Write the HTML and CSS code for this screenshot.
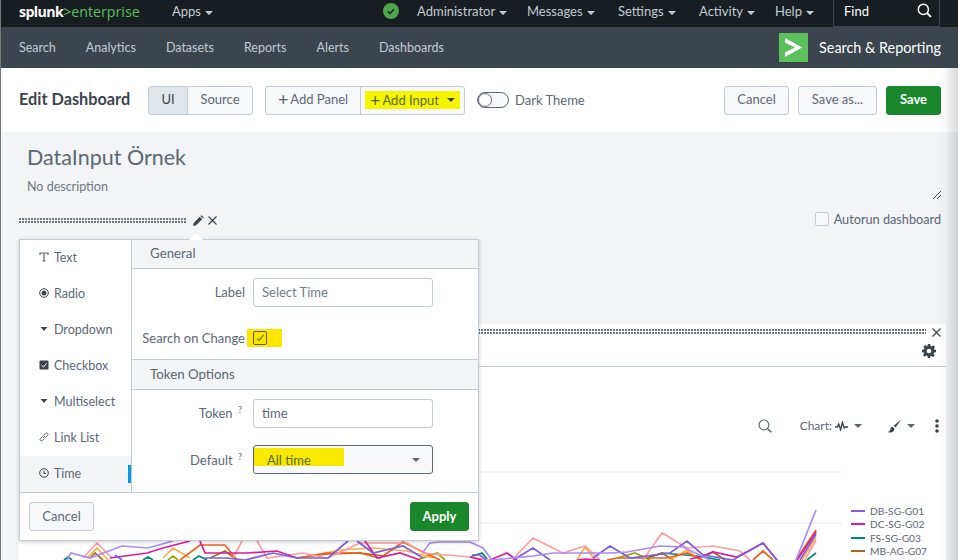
FILE: index.html
```html
<!DOCTYPE html>
<html lang="en">
<head>
  <meta charset="UTF-8" />
  <meta name="viewport" content="width=device-width, initial-scale=1" />
  <title>Edit Dashboard - Splunk</title>
  <link rel="stylesheet" href="styles.css">
</head>
<body>
  <div class="page">
    <header class="topbar">
      <div class="logo"><span class="logo-splunk">splunk</span><span class="logo-ent">&gt;enterprise</span></div>
      <a class="top-link apps">Apps <i class="caret"></i></a>
      <div class="top-right">
        <svg class="status" viewBox="0 0 16 16" width="16" height="16"><circle cx="8" cy="8" r="8" fill="#4fa64f"/><path d="M4.800 8.200l2.200 2.200 4-4.200" fill="none" stroke="#17212a" stroke-width="1.400"/></svg>
        <a class="top-link admin">Administrator <i class="caret"></i></a>
        <a class="top-link msg">Messages <i class="caret"></i></a>
        <a class="top-link set">Settings <i class="caret"></i></a>
        <a class="top-link act">Activity <i class="caret"></i></a>
        <a class="top-link hlp">Help <i class="caret"></i></a>
        <div class="find">
          <span>Find</span>
          <svg viewBox="0 0 16 16" width="15" height="15"><circle cx="6.800" cy="6.800" r="5.400" fill="none" stroke="#fff" stroke-width="1.600"/><path d="M10.800 10.800l4 4" stroke="#fff" stroke-width="2.200"/></svg>
        </div>
      </div>
    </header>

    <nav class="appbar">
      <a>Search</a>
      <a>Analytics</a>
      <a>Datasets</a>
      <a>Reports</a>
      <a>Alerts</a>
      <a>Dashboards</a>
      <div class="app-name">
        <span class="app-icon"><svg viewBox="0 0 29 29" width="29" height="29"><path d="M6 5l17 9.500-17 9.500v-4.500l10-5-10-5z" fill="#fff"/></svg></span>
        <span>Search &amp; Reporting</span>
      </div>
    </nav>

    <section class="toolbar">
      <h1>Edit Dashboard</h1>
      <div class="btn-group mode">
        <button class="active">UI</button>
        <button>Source</button>
      </div>
      <div class="btn-group add">
        <button class="add-panel"><span class="plus">+</span>Add Panel</button>
        <button class="add-input"><span class="mark"><span class="plus">+</span>Add Input <i class="caret dark"></i></span></button>
      </div>
      <div class="toggle"><i class="switch"><b></b></i>Dark Theme</div>
      <div class="actions">
        <button class="btn btn-cancel">Cancel</button>
        <button class="btn btn-saveas">Save as...</button>
        <button class="btn btn-save">Save</button>
      </div>
    </section>

    <main class="canvas">
      <h2>DataInput Örnek</h2>
      <p class="desc">No description</p>
      <svg class="resize" viewBox="0 0 8 8" width="8" height="8"><path d="M0 8l8-8M4 8l4-4" stroke="#444" stroke-width="1"/></svg>

      <div class="input-row">
        <div class="handle small"></div>
        <svg class="pencil" viewBox="0 0 12 12" width="11" height="11"><path d="M0 12l.8-3.400 6.600-6.600 2.600 2.600-6.600 6.600zM8.200 1.200l1-1 2.600 2.600-1 1z" fill="#3c444d"/></svg>
        <svg class="close" viewBox="0 0 9 9" width="9" height="9"><path d="M.5.5l8 8M8.500.5l-8 8" stroke="#3c444d" stroke-width="1.200"/></svg>
        <label class="autorun"><i class="check-empty"></i>Autorun dashboard</label>
      </div>

      <div class="panel">
        <div class="panel-head">
          <div class="handle wide"></div>
          <svg class="close" viewBox="0 0 9 9" width="9" height="9"><path d="M.5.5l8 8M8.500.5l-8 8" stroke="#3c444d" stroke-width="1.200"/></svg>
          <svg class="gear" viewBox="0 0 24 24" width="14" height="14"><path d="M10 0h4l.6 3.200 2.200.9 2.700-1.800 2.800 2.800-1.800 2.700.9 2.200L24 10v4l-3.200.6-.9 2.200 1.800 2.700-2.800 2.800-2.700-1.800-2.200.9L14 24h-4l-.6-3.200-2.200-.9-2.700 1.800-2.800-2.800 1.800-2.700-.9-2.200L0 14v-4l3.200-.6.9-2.200-1.800-2.700 2.800-2.800 2.700 1.800 2.200-.9zM12 8a4 4 0 100 8 4 4 0 000-8z" fill="#3c444d" fill-rule="evenodd"/></svg>
        </div>
        <div class="chart">
          <svg class="plot" viewBox="0 0 958 560" width="958" height="560">
            <path class="grid" d="M20 472H842M20 523H842"/>
            <path class="ln" stroke="#00897b" d="M64 560L68 557 72 560M143 560L148 557 153 560M193 560L199 556 207 560M470 557L482 553 488 560M647 558L662 553 697 556 720 560M807 560L816 553"/>
            <path class="ln" stroke="#9aa800" d="M168 560L173 556 178 560M417 560L437 553 445 560M617 558L635 553 650 560"/>
            <path class="ln" stroke="#a6681b" d="M90 558L95 553 103 560M210 558L225 551 237 560M297 558L327 554 360 553 385 556M650 557L662 553 673 560M703 557L713 552 725 560M797 560L816 531"/>
            <path class="ln" stroke="#f8b04a" d="M87 558L97 548 108 560M163 558L173 548 190 558M300 558L340 550 373 548 407 551 433 558M577 560L585 547 595 560M670 560L687 550 700 560M802 560L816 537"/>
            <path class="ln" stroke="#f25f1a" d="M180 560L200 545 225 545 237 560M297 558L327 553 360 553 380 558 403 542 423 552 440 560M607 560L617 558 667 558 687 553 703 560M753 560L763 551 773 560M796 560L816 530"/>
            <path class="ln" stroke="#ff9da0" d="M83 558L97 543 112 558M233 558L242 541M257 541L267 558 303 553 327 558 345 550 360 543 407 543 423 553 470 557 490 560M513 559L533 538 563 553 585 546 600 560M643 560L662 533 687 548 713 546 740 551 750 560M805 560L816 540"/>
            <path class="ln" stroke="#d91e9b" d="M110 558L147 553 163 548 190 541M200 541L205 553 247 553 277 551 297 558M365 541L377 558 400 553 420 560M470 557L482 560M490 560L507 553 517 560M577 560L585 559 600 560M690 559L700 557 713 552 737 557 763 543 777 560M797 560L816 532"/>
            <path class="ln" stroke="#7c5ee0" d="M115 555L122 560M203 558L227 558 245 560 273 553 297 558 328 558 348 541M357 541L373 553 403 546 423 558M472 555L480 555 486 560M513 560L533 548 550 560M593 558L610 546 630 558 670 553 687 541 703 555 733 560 763 543 777 560M800 560L816 534"/>
            <path class="ln" stroke="#a78bfa" d="M67 560L71 553 90 558 122 546 148 548 173 541M423 552L430 543 440 542 470 542 483 548 492 560 533 556 553 553 610 553 627 552 660 546 683 547 710 560M796 560L816 510"/>
          </svg>
          <ul class="legend">
            <li><i class="swatch s1"></i>DB-SG-G01</li>
            <li><i class="swatch s2"></i>DC-SG-G02</li>
            <li><i class="swatch s3"></i>FS-SG-G03</li>
            <li><i class="swatch s4"></i>MB-AG-G07</li>
          </ul>
        </div>
        <div class="chart-tools">
          <svg viewBox="0 0 16 16" width="14" height="14"><circle cx="6.800" cy="6.800" r="5.600" fill="none" stroke="#5c6773" stroke-width="1.300"/><path d="M10.800 10.800l4.400 4.400" stroke="#5c6773" stroke-width="1.800"/></svg>
          <span class="chart-label">Chart:</span>
          <svg class="pulse" viewBox="0 0 14 10" width="13" height="10"><path d="M0 6h2.500l1.500-3 2 6 2-8 2 6 1-1h3" fill="none" stroke="#3c444d" stroke-width="1.500"/></svg>
          <i class="caret grey"></i>
          <svg class="brush" viewBox="0 0 14 14" width="14" height="14"><path d="M13.500 0L5.800 6.800l1.700 1.700zM4.800 7.800c-1.800 0-2.300 1.300-2.500 2.700-.1 1-1 1.700-2.300 2.700 2.800.8 6.200.1 6.500-3.400z" fill="#3c444d"/></svg>
          <i class="caret grey"></i>
          <svg class="dots" viewBox="0 0 4 14" width="4" height="14"><circle cx="2" cy="2" r="1.800" fill="#3c444d"/><circle cx="2" cy="7" r="1.800" fill="#3c444d"/><circle cx="2" cy="12" r="1.800" fill="#3c444d"/></svg>
        </div>
      </div>

      <div class="popover">
        <div class="arrow"></div>
        <div class="pop-body">
          <ul class="types">
            <li><svg viewBox="0 0 10 10" width="10" height="10"><path d="M1 3V1h8v2M5 1v8M3.500 9h3" fill="none" stroke="#5c6773" stroke-width="1.200"/></svg>Text</li>
            <li><svg viewBox="0 0 10 10" width="10" height="10"><circle cx="5" cy="5" r="4.300" fill="none" stroke="#3c444d"/><circle cx="5" cy="5" r="2.500" fill="#3c444d"/></svg>Radio</li>
            <li><svg viewBox="0 0 10 10" width="10" height="10"><path d="M1.500 3h7L5 7z" fill="#3c444d"/></svg>Dropdown</li>
            <li><svg viewBox="0 0 10 10" width="10" height="10"><rect x=".5" y=".5" width="9" height="9" rx="1" fill="#3c444d"/><path d="M2.500 5.200l2 1.800 3-3.500" fill="none" stroke="#fff"/></svg>Checkbox</li>
            <li><svg viewBox="0 0 10 10" width="10" height="10"><path d="M1.500 3h7L5 7z" fill="#3c444d"/></svg>Multiselect</li>
            <li><svg viewBox="0 0 10 10" width="10" height="10"><path d="M4 6l2-2M3.500 4.500L1.500 6.500a1.400 1.400 0 002 2l2-2M6.500 5.500l2-2a1.400 1.400 0 00-2-2l-2 2" fill="none" stroke="#5c6773"/></svg>Link List</li>
            <li class="selected"><svg viewBox="0 0 10 10" width="10" height="10"><circle cx="5" cy="5" r="4.300" fill="none" stroke="#3c444d"/><path d="M5 2.500V5.500H7" fill="none" stroke="#3c444d"/></svg>Time</li>
          </ul>
          <div class="form">
            <div class="form-head">General</div>
            <div class="field label-field">
              <label>Label</label>
              <div class="text-input placeholder">Select Time</div>
            </div>
            <div class="field check-field">
              <label>Search on Change</label>
              <span class="check-mark"><i class="check-box"><svg viewBox="0 0 10 10" width="10" height="10"><path d="M2 5.500l2 2 4.500-5.500" fill="none" stroke="#6b8a00" stroke-width="1.200"/></svg></i></span>
            </div>
            <div class="form-head token-head">Token Options</div>
            <div class="field token-field">
              <label>Token <sup>?</sup></label>
              <div class="text-input">time</div>
            </div>
            <div class="field default-field">
              <label>Default <sup>?</sup></label>
              <div class="select-input">
                <span class="select-mark"></span>
                <span class="select-text">All time</span>
                <i class="caret grey"></i>
              </div>
            </div>
          </div>
        </div>
        <div class="pop-foot">
          <button class="btn btn-pop-cancel">Cancel</button>
          <button class="btn btn-apply">Apply</button>
        </div>
      </div>
    </main>
    <div class="edge-shade"></div>
  </div>
</body>
</html>
```

FILE: styles.css
```css
* {
  box-sizing: border-box;
}
html, body {
  margin: 0;
  height: 100%;
  overflow: hidden;
}
body {
  font-family: "Lato", "Liberation Sans", sans-serif;
  font-size: 13px;
  color: #5c6773;
  background: #f2f4f5;
}
.page {
  width: 958px;
  height: 560px;
  position: relative;
  overflow: hidden;
  border-left: 1px solid #777;
}
.edge-shade {
  position: absolute;
  top: 68px;
  right: 0;
  bottom: 0;
  width: 26px;
  background: linear-gradient(to right, rgba(0,0,0,0), rgba(0,0,0,0.02) 50%, rgba(0,0,0,0.15));
  z-index: 3;
}
i {
  display: block;
}
.caret {
  display: inline-block;
  width: 0;
  height: 0;
  border-left: 4px solid transparent;
  border-right: 4px solid transparent;
  border-top: 4px solid #c3cbd4;
  vertical-align: middle;
  margin-left: 1px;
}
.caret.dark {
  border-top-color: #3c444d;
}
.caret.grey {
  border-top-color: #5c6773;
}

/* top bar */
.topbar {
  height: 27px;
  background: #171d21;
  display: flex;
  align-items: center;
  padding: 0 0 5px 18px;
  color: #c3cbd4;
}
.logo {
  width: 153px;
  font-size: 14.200px;
  font-family: "Open Sans", sans-serif;
}
.logo-splunk {
  color: #fff;
  font-weight: 700;
  letter-spacing: -0.6px;
}
.logo-ent {
  color: #5cc05c;
}
.top-link {
  white-space: nowrap;
}
.top-right {
  margin-left: auto;
  display: flex;
  align-items: center;
  height: 22px;
  margin-right: 18px;
}
.status {
  margin-right: 18px;
}
.admin {
  width: 110px;
}
.msg {
  width: 91px;
}
.set {
  width: 81px;
}
.act {
  width: 76px;
}
.hlp {
  width: 58px;
}
.find {
  width: 107px;
  height: 27px;
  margin-bottom: -5px;
  border: 1px solid #3c444d;
  border-top: 0;
  display: flex;
  align-items: center;
  justify-content: space-between;
  padding: 0 7px 5px 10px;
  color: #fff;
}

/* app bar */
.appbar {
  height: 41px;
  background: #3c444d;
  display: flex;
  align-items: center;
  padding: 0 0 1px 18px;
  gap: 30px;
  font-size: 12.500px;
  color: #c3cbd4;
}
.app-name {
  margin-left: auto;
  margin-right: 17px;
  display: flex;
  align-items: center;
  gap: 11px;
  color: #fff;
  font-size: 14.400px;
}
.app-icon {
  width: 29px;
  height: 29px;
  background: #5cc05c;
  display: block;
}
.app-icon svg {
  display: block;
}

/* toolbar */
.toolbar {
  height: 64px;
  background: #fff;
  display: flex;
  align-items: center;
  padding: 0 17px 0 18px;
  position: relative;
}
h1 {
  margin: 0 18px 0 0;
  padding-bottom: 3px;
  font-size: 16.300px;
  font-weight: 700;
  color: #3c444d;
  width: 111px;
  white-space: nowrap;
}
button {
  font-family: inherit;
  font-size: 13px;
  color: #5c6773;
  background: #f7f8fa;
  border: 1px solid #c3cbd4;
  border-radius: 3px;
  height: 29px;
  padding: 0 0 2px;
}
.btn-group {
  display: flex;
}
.btn-group button {
  border-radius: 0;
  margin-left: -1px;
}
.btn-group button:first-child {
  border-radius: 3px 0 0 3px;
  margin-left: 0;
}
.btn-group button:last-child {
  border-radius: 0 3px 3px 0;
}
.mode .active {
  width: 40px;
  background: #e1e6eb;
  color: #3c444d;
}
.mode button:last-child {
  width: 66px;
}
.add {
  margin-left: 12px;
}
.add-panel {
  width: 96px;
  display: flex;
  align-items: center;
  justify-content: center;
}
.add-input {
  width: 105px;
  display: flex;
  align-items: center;
  justify-content: center;
  padding: 0;
}
.plus {
  font-size: 18px;
  line-height: 1;
  margin-right: 2px;
}
.mark {
  background: #f5f500;
  width: 95px;
  height: 18px;
  padding-bottom: 1px;
  display: flex;
  align-items: center;
  justify-content: center;
  color: #5c6a1c;
}
.mark .caret {
  margin-left: 8px;
}
.toggle {
  display: flex;
  align-items: center;
  margin-left: 12px;
  gap: 6px;
  color: #5c6773;
}
.switch {
  width: 32px;
  height: 16px;
  border: 1px solid #5c6773;
  border-radius: 8px;
  background: #f7f8fa;
}
.switch b {
  display: block;
  width: 14px;
  height: 14px;
  border-radius: 50%;
  background: #fff;
  border: 1px solid #5c6773;
}
.actions {
  margin-left: auto;
  display: flex;
  gap: 9px;
}
.btn-cancel {
  width: 65px;
}
.btn-saveas {
  width: 79px;
}
.btn-save {
  width: 55px;
  background: #1a872c;
  border-color: #1a872c;
  color: #fff;
  font-weight: 700;
}

/* dashboard canvas */
.canvas {
  position: relative;
  height: 428px;
  padding: 11px 0 0 26px;
}
h2 {
  margin: 0;
  font-size: 21.500px;
  font-weight: 400;
  color: #5c6773;
  line-height: 29px;
}
.desc {
  margin: 6px 0 0;
  font-size: 12.500px;
  color: #6f7983;
  line-height: 17px;
}
.resize {
  position: absolute;
  top: 59px;
  right: 17px;
}
.input-row {
  position: absolute;
  left: 18px;
  top: 76px;
  right: 17px;
  height: 24px;
  display: flex;
  align-items: center;
}
.handle {
  height: 5px;
  background-image: radial-gradient(circle at 1px 1px, #6e7883 1px, transparent 1px);
  background-size: 3px 3px;
}
.handle.small {
  width: 168px;
}
.pencil {
  margin-left: 6px;
}
.close {
  margin-left: 4px;
}
.autorun {
  margin-left: auto;
  padding-bottom: 2px;
  display: flex;
  align-items: center;
  gap: 5px;
  font-size: 12.700px;
  color: #5c6773;
}
.check-empty {
  width: 14px;
  height: 14px;
  border: 1px solid #c3cbd4;
  background: #f7f8fa;
  border-radius: 2px;
}

/* chart panel */
.panel {
  position: absolute;
  left: 18px;
  top: 192px;
  width: 927px;
  height: 240px;
  background: #fff;
  overflow: hidden;
}
.panel-head {
  height: 43px;
  border-bottom: 1px solid #c3cbd4;
  position: relative;
}
.panel-head .handle {
  position: absolute;
  top: 5px;
  left: 0;
  right: 20px;
}
.panel-head .close {
  position: absolute;
  top: 4px;
  right: 5px;
}
.gear {
  position: absolute;
  right: 10px;
  top: 20px;
}
.chart-tools {
  position: absolute;
  top: 94px;
  right: 1px;
  display: flex;
  align-items: center;
  color: #5c6773;
}
.chart-label {
  margin-left: 28px;
  margin-right: 3px;
  font-size: 12px;
}
.chart-tools .pulse + .caret {
  margin-left: 6px;
}
.brush {
  margin-left: 26px;
}
.brush + .caret {
  margin-left: 5px;
}
.dots {
  margin-left: 20px;
  margin-right: 6px;
}
.chart {
  position: absolute;
  inset: 0;
}
.plot {
  position: absolute;
  left: -19px;
  top: -324px;
}
.grid {
  stroke: #f0f0f0;
  stroke-width: 1.500;
  fill: none;
}
.ln {
  fill: none;
  stroke-width: 1.700;
}
.legend {
  position: absolute;
  top: 180px;
  left: 832px;
  margin: 0;
  padding: 0;
  list-style: none;
  font-size: 10.200px;
  color: #5c6773;
}
.legend li {
  display: flex;
  align-items: center;
  height: 13.500px;
  gap: 5px;
}
.swatch {
  width: 14px;
  height: 2px;
}
.s1 { background: #7c5ee0; }
.s2 { background: #d91e9b; }
.s3 { background: #00897b; }
.s4 { background: #a6681b; }

/* add input popover */
.popover {
  position: absolute;
  left: 18px;
  top: 107px;
  width: 460px;
  height: 302px;
  background: #fff;
  border: 1px solid #c3cbd4;
  box-shadow: 0 1px 4px rgba(0,0,0,0.2);
  z-index: 2;
}
.arrow {
  position: absolute;
  top: -7px;
  left: 169px;
  border-left: 7px solid transparent;
  border-right: 7px solid transparent;
  border-bottom: 7px solid #fff;
}
.pop-body {
  display: flex;
  height: 253px;
  border-bottom: 1px solid #c3cbd4;
}
.types {
  width: 112px;
  margin: 0;
  padding: 0;
  list-style: none;
  border-right: 1px solid #c3cbd4;
}
.types li {
  height: 36px;
  display: flex;
  align-items: center;
  padding: 0 0 2px 19px;
  gap: 5px;
  font-size: 12.500px;
  color: #5c6773;
  position: relative;
}
.types .selected {
  background: #f2f4f5;
}
.types .selected::after {
  content: "";
  position: absolute;
  right: 0;
  top: 9px;
  width: 3px;
  height: 18px;
  background: #009ceb;
}
.form {
  flex: 1;
}
.form-head {
  height: 29px;
  background: #f2f4f5;
  border-bottom: 1px solid #c3cbd4;
  padding: 0 0 2px 18px;
  display: flex;
  align-items: center;
  font-size: 13.300px;
  color: #5c6773;
}
.token-head {
  border-top: 1px solid #c3cbd4;
  height: 31px;
}
.field {
  display: flex;
  align-items: center;
}
.field label {
  width: 113px;
  margin-right: 8px;
  text-align: right;
  color: #5c6773;
  white-space: nowrap;
}
sup {
  font-size: 9px;
  margin: 0 3px 0 2px;
}
.label-field {
  height: 44px;
  padding-top: 2px;
}
.check-field {
  height: 46px;
  padding-top: 4px;
}
.check-field label {
  margin-right: 2px;
}
.token-field {
  height: 46px;
}
.default-field {
  height: 46px;
  padding-top: 1px;
}
.text-input {
  width: 180px;
  height: 29px;
  border: 1px solid #c3cbd4;
  border-radius: 3px;
  padding-left: 8px;
  line-height: 26px;
  color: #5c6773;
}
.placeholder {
  color: #727c87;
}
.check-mark {
  width: 35px;
  height: 18px;
  background: #fee600;
  display: flex;
  align-items: center;
  padding-left: 6px;
}
.check-box {
  width: 14px;
  height: 14px;
  border: 1px solid #5c5c20;
  border-radius: 2px;
  display: flex;
  align-items: center;
  justify-content: center;
}
.select-input {
  width: 180px;
  height: 29px;
  border: 1px solid #5c6773;
  border-radius: 3px;
  background: #f7f8fa;
  position: relative;
  display: flex;
  align-items: center;
  justify-content: space-between;
  padding: 0 12px 0 13px;
}
.select-mark {
  position: absolute;
  left: 0;
  top: 2px;
  width: 90px;
  height: 18px;
  background: #f7e900;
}
.select-text {
  position: relative;
  color: #5c6a1c;
}
.pop-foot {
  height: 47px;
  display: flex;
  align-items: center;
  justify-content: space-between;
  padding: 0 9px;
}
.btn-pop-cancel {
  width: 65px;
}
.btn-apply {
  width: 59px;
  background: #1a872c;
  border-color: #1a872c;
  color: #fff;
  font-weight: 700;
}
```
